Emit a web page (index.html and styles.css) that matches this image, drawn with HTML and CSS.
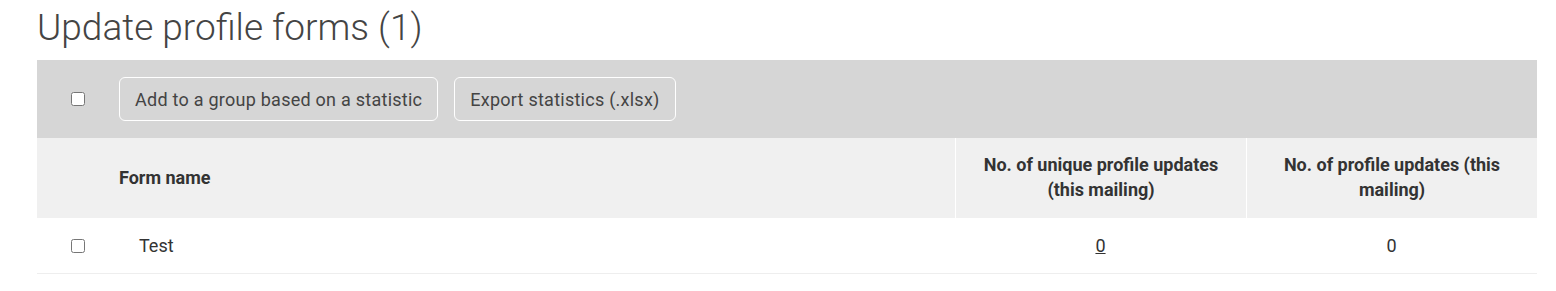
FILE: index.html
```html
<!DOCTYPE html>
<html>
<head>
<meta charset="utf-8">
<link rel="stylesheet" href="styles.css">
</head>
<body>
<div class="page">
  <h1 class="title">Update profile forms (1)</h1>
  <div class="table">
    <div class="toolbar">
      <div class="cb-cell"><input type="checkbox" class="cb"></div>
      <div class="actions">
        <button class="btn">Add to a group based on a statistic</button>
        <button class="btn">Export statistics (.xlsx)</button>
      </div>
    </div>
    <div class="row head">
      <div class="cb-cell"></div>
      <div class="cell name">Form name</div>
      <div class="cell num">No. of unique profile updates (this mailing)</div>
      <div class="cell num">No. of profile updates (this mailing)</div>
    </div>
    <div class="row data">
      <div class="cb-cell"><input type="checkbox" class="cb"></div>
      <div class="cell name"><span class="test">Test</span></div>
      <div class="cell num"><a class="link" href="#">0</a></div>
      <div class="cell num">0</div>
    </div>
  </div>
</div>
</body>
</html>
```
FILE: styles.css
```css
html, body {
  margin: 0;
  padding: 0;
  background: #fff;
}
body {
  font-family: Roboto, "Liberation Sans", sans-serif;
  color: #333;
}
.page {
  padding: 0 19px 0 37px;
}
.title {
  margin: 0;
  height: 60px;
  font-size: 37px;
  font-weight: 300;
  line-height: 56px;
  color: #444;
}
.table {
  width: 1500px;
}
.toolbar {
  display: flex;
  align-items: center;
  height: 78px;
  background: #d6d6d6;
}
.cb-cell {
  width: 82px;
  flex: none;
  display: flex;
  justify-content: center;
  align-items: center;
}
.cb {
  margin: 0;
  width: 14px;
  height: 14px;
}
.actions {
  display: flex;
  gap: 16px;
}
.btn {
  font-family: Roboto, "Liberation Sans", sans-serif;
  font-size: 18px;
  letter-spacing: 0.25px;
  color: #444;
  background: transparent;
  border: 1px solid #fff;
  border-radius: 6px;
  height: 44px;
  padding: 0 15px;
  cursor: pointer;
}
.row {
  display: grid;
  grid-template-columns: 82px 1fr 291px 291px;
}
.head {
  background: #f0f0f0;
  height: 80px;
  font-weight: 700;
  font-size: 18px;
  line-height: 25px;
  color: #333;
}
.head .cell {
  display: flex;
  align-items: center;
  padding-bottom: 2px;
}
.head .num {
  justify-content: center;
  text-align: center;
  border-left: 1px solid #fff;
  padding-left: 24px;
  padding-right: 24px;
}
.data {
  height: 55px;
  border-bottom: 1px solid #eee;
  font-size: 18px;
  color: #333;
}
.data .cell {
  display: flex;
  align-items: center;
}
.data .num {
  justify-content: center;
}
.test {
  padding-left: 20px;
}
.link {
  color: #333;
  text-decoration: underline;
}
```
